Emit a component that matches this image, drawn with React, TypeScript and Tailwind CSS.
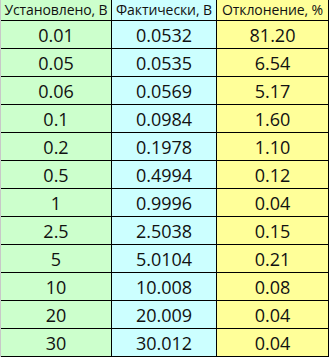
import React from "react";

const rows: [string, string, string][] = [
  ["0.01", "0.0532", "81.20"],
  ["0.05", "0.0535", "6.54"],
  ["0.06", "0.0569", "5.17"],
  ["0.1", "0.0984", "1.60"],
  ["0.2", "0.1978", "1.10"],
  ["0.5", "0.4994", "0.12"],
  ["1", "0.9996", "0.04"],
  ["2.5", "2.5038", "0.15"],
  ["5", "5.0104", "0.21"],
  ["10", "10.008", "0.08"],
  ["20", "20.009", "0.04"],
  ["30", "30.012", "0.04"],
];

export default function App() {
  return (
    <div
      className="w-[330px] h-[358px] bg-white overflow-hidden text-[#111]"
      style={{ fontFamily: '"Open Sans", "Noto Sans", sans-serif' }}
    >
      <div className="grid grid-cols-[111px_105px_112px] border-l border-[#c8c8c8] w-[329px]">
        <div className="h-[21px] bg-[#ccffcc] border-r border-b border-black flex items-end justify-center pb-[1px] text-[14px] leading-[18px] tracking-[-0.1px] whitespace-nowrap">
          Установлено, В
        </div>
        <div className="h-[21px] bg-[#ccffff] border-r border-b border-black flex items-end justify-center pb-[1px] text-[14px] leading-[18px] tracking-[-0.1px] whitespace-nowrap">
          Фактически, В
        </div>
        <div className="h-[21px] bg-[#ffff99] border-r border-b border-black flex items-end justify-center pb-[1px] text-[14px] leading-[18px] tracking-[-0.1px] whitespace-nowrap">
          Отклонение, %
        </div>
        {rows.map((r, i) => (
          <React.Fragment key={i}>
            <div className="h-[28px] bg-[#ccffcc] border-r border-b border-black flex items-center justify-center text-[18px] leading-none pt-[1px]">
              {r[0]}
            </div>
            <div className="h-[28px] bg-[#ccffff] border-r border-b border-black flex items-center justify-center text-[18px] leading-none pt-[1px]">
              {r[1]}
            </div>
            <div className="h-[28px] bg-[#ffff99] border-r border-b border-black flex items-center justify-center text-[18px] leading-none pt-[1px]">
              {r[2]}
            </div>
          </React.Fragment>
        ))}
      </div>
    </div>
  );
}
